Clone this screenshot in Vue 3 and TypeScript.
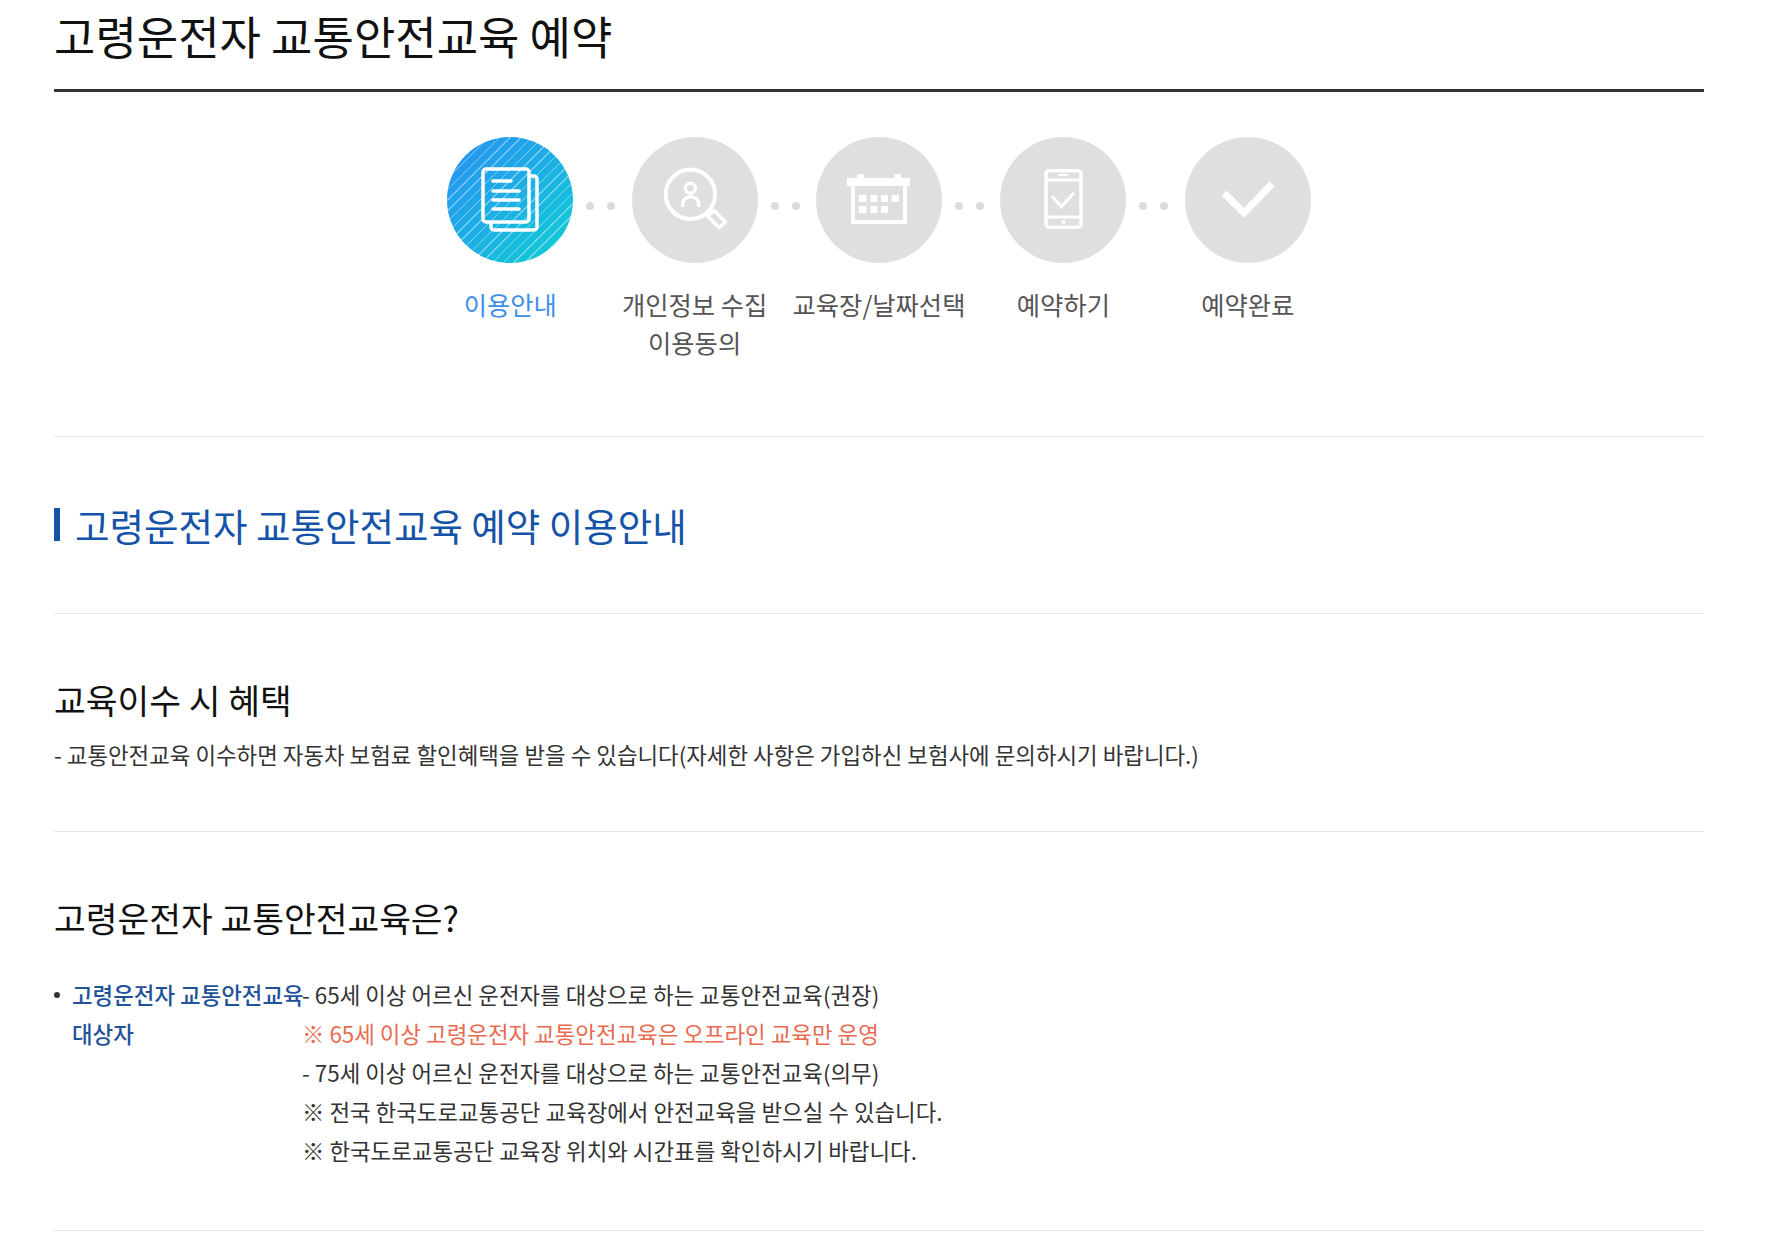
<script setup lang="ts">
interface Step {
  label: string[]
  active?: boolean
  icon: string
}

const steps: Step[] = [
  { label: ['이용안내'], active: true, icon: 'doc' },
  { label: ['개인정보 수집', '이용동의'], icon: 'search' },
  { label: ['교육장/날짜선택'], icon: 'calendar' },
  { label: ['예약하기'], icon: 'phone' },
  { label: ['예약완료'], icon: 'check' },
]
</script>

<template>
  <div class="page">
    <h1 class="title">고령운전자 교통안전교육 예약</h1>

    <ol class="steps">
      <li v-for="(step, i) in steps" :key="step.icon" class="step" :class="{ 'step--active': step.active }">
        <div class="step__circle">
          <svg v-if="step.icon === 'doc'" class="step__icon" viewBox="0 0 126 126" fill="none" stroke="#fff" stroke-width="3.500" stroke-linejoin="round">
            <path d="M36 35a3 3 0 0 1 3-3h40a3 3 0 0 1 3 3v47a3 3 0 0 1-3 3H39a3 3 0 0 1-3-3z" />
            <path d="M82 39h5a3 3 0 0 1 3 3v48a3 3 0 0 1-3 3H47a3 3 0 0 1-3-3v-5" />
            <path d="M46 44h18M46 54h26M46 63h26M46 72h26" stroke-linecap="round" />
          </svg>
          <svg v-else-if="step.icon === 'search'" class="step__icon" viewBox="0 0 126 126" fill="none" stroke="#fff" stroke-width="4" stroke-linejoin="round">
            <circle cx="58.400" cy="57.300" r="24.700" />
            <circle cx="58.400" cy="51.300" r="5" stroke-width="3.400" />
            <path d="M50.700 70v-3a7 7 0 0 1 7-7h2a7 7 0 0 1 7 7v3" stroke-width="3.400" />
            <path d="M75.500 79l6.500-5.500L93.500 85l-6.300 5.800z" stroke-width="3.500" />
          </svg>
          <svg v-else-if="step.icon === 'calendar'" class="step__icon" viewBox="0 0 126 126" fill="#fff">
            <path d="M31 41h63v8h-3v38H35V49h-4zM39 49v34h48V49z" fill-rule="evenodd" />
            <rect x="41" y="37" width="7" height="5" rx="1.500" />
            <rect x="78" y="37" width="7" height="5" rx="1.500" />
            <rect x="43" y="58" width="7.500" height="7" />
            <rect x="54.500" y="58" width="7" height="7" />
            <rect x="65" y="58" width="7" height="7" />
            <rect x="75.500" y="58" width="7.500" height="7" />
            <rect x="43" y="69" width="7.500" height="7" />
            <rect x="54.500" y="69" width="7" height="7" />
            <rect x="65" y="69" width="7" height="7" />
          </svg>
          <svg v-else-if="step.icon === 'phone'" class="step__icon" viewBox="0 0 126 126" fill="none" stroke="#fff">
            <rect x="46" y="33.750" width="35" height="56.500" rx="3" stroke-width="3.500" />
            <path d="M46 43h35M46 80h35" stroke-width="3" />
            <path d="M58 38h10" stroke-width="1.800" />
            <circle cx="63.500" cy="85" r="2" fill="#fff" stroke="none" />
            <path d="M52 59l9.500 10.700L74 55.700" stroke-width="3" />
          </svg>
          <svg v-else class="step__icon" viewBox="0 0 126 126" fill="none" stroke="#fff" stroke-width="7">
            <path d="M39 56l20 20 28-29" />
          </svg>
        </div>
        <span v-if="i < steps.length - 1" class="step__dots"><i></i><i></i></span>
        <p class="step__label">
          <span v-for="line in step.label" :key="line">{{ line }}</span>
        </p>
      </li>
    </ol>

    <section class="lead">
      <h2 class="lead__title">고령운전자 교통안전교육 예약 이용안내</h2>
    </section>

    <section class="block block--benefit">
      <h3 class="block__title">교육이수 시 혜택</h3>
      <p class="block__text">- 교통안전교육 이수하면 자동차 보험료 할인혜택을 받을 수 있습니다(자세한 사항은 가입하신 보험사에 문의하시기 바랍니다.)</p>
    </section>

    <section class="block block--about">
      <h3 class="block__title">고령운전자 교통안전교육은?</h3>
      <ul class="info">
        <li class="info__row">
          <span class="info__bullet"></span>
          <strong class="info__term">고령운전자 교통안전교육<br />대상자</strong>
          <div class="info__desc">
            <p>- 65세 이상 어르신 운전자를 대상으로 하는 교통안전교육(권장)</p>
            <p class="info__warn">※ 65세 이상 고령운전자 교통안전교육은 오프라인 교육만 운영</p>
            <p>- 75세 이상 어르신 운전자를 대상으로 하는 교통안전교육(의무)</p>
            <p>※ 전국 한국도로교통공단 교육장에서 안전교육을 받으실 수 있습니다.</p>
            <p>※ 한국도로교통공단 교육장 위치와 시간표를 확인하시기 바랍니다.</p>
          </div>
        </li>
      </ul>
    </section>
  </div>
</template>

<style scoped>
.page {
  width: 1650px;
  margin: 0 54px;
  height: 1257px;
  overflow: hidden;
  font-family: 'Noto Sans CJK KR', 'Noto Sans', sans-serif;
  color: #222;
}

.title {
  margin: 0;
  height: 89px;
  border-bottom: 3px solid #333;
  font-size: 45px;
  font-weight: 400;
  line-height: 72px;
  color: #111;
}

.steps {
  display: flex;
  justify-content: center;
  gap: 58.400px;
  margin: 0;
  padding: 45px 0 0;
  height: 345px;
  box-sizing: border-box;
  list-style: none;
  border-bottom: 1px solid #e6e6e6;
}

.step {
  position: relative;
  width: 126px;
  display: flex;
  flex-direction: column;
  align-items: center;
}

.step__circle {
  width: 126px;
  height: 126px;
  border-radius: 50%;
  background: #dfdfdf;
  flex: none;
}

.step--active .step__circle {
  background:
    repeating-linear-gradient(135deg, rgba(255, 255, 255, 0) 0 6.400px, rgba(255, 255, 255, 0.42) 6.400px 7.600px),
    linear-gradient(135deg, #2a8ff5, #0fcfd4);
}

.step__icon {
  display: block;
  width: 126px;
  height: 126px;
}

.step__dots {
  position: absolute;
  left: 139px;
  top: 65px;
  display: flex;
  gap: 13px;
}

.step__dots i {
  width: 8px;
  height: 8px;
  border-radius: 50%;
  background: #dcdcdc;
}

.step__label {
  margin: 22px -30px 0;
  font-size: 25.300px;
  line-height: 38px;
  text-align: center;
  white-space: nowrap;
  color: #555;
}

.step__label span {
  display: block;
}

.step--active .step__label {
  color: #3d8fe8;
}

.lead {
  height: 177px;
  box-sizing: border-box;
  padding-top: 71px;
  border-bottom: 1px solid #e6e6e6;
}

.lead__title {
  margin: 0;
  padding-left: 15px;
  border-left: 6px solid #1553a8;
  height: 33px;
  font-size: 37.500px;
  font-weight: 400;
  line-height: 33px;
  color: #1553a8;
}

.block {
  box-sizing: border-box;
  border-bottom: 1px solid #e6e6e6;
}

.block--benefit {
  height: 218px;
  padding-top: 60px;
}

.block--about {
  height: 399px;
  padding-top: 60px;
}

.block__title {
  margin: 0;
  font-size: 34.500px;
  font-weight: 400;
  line-height: 50px;
  color: #111;
}

.block__text {
  margin: 11px 0 0;
  font-size: 22.400px;
  line-height: 38px;
  color: #333;
}

.info {
  margin: 33px 0 0;
  padding: 0;
  list-style: none;
}

.info__row {
  position: relative;
  display: flex;
  padding-left: 18px;
  font-size: 22.400px;
  line-height: 39px;
}

.info__bullet {
  position: absolute;
  left: 0;
  top: 17px;
  width: 6px;
  height: 6px;
  border-radius: 50%;
  background: #333;
}

.info__term {
  flex: 0 0 230px;
  min-width: 0;
  font-weight: 500;
  white-space: nowrap;
  color: #1f5299;
}

.info__desc p {
  margin: 0;
  color: #333;
}

.info__desc .info__warn {
  color: #ea6a52;
}
</style>
